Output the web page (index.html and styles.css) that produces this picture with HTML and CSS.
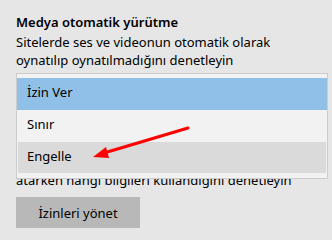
FILE: index.html
```html
<!DOCTYPE html>
<html lang="tr">
<head>
    <meta charset="UTF-8">
    <title>Medya otomatik yürütme</title>
    <link rel="stylesheet" href="styles.css">
</head>
<body>
    <div class="settings-panel">
        <h2 class="setting-title">Medya otomatik yürütme</h2>
        <p class="setting-desc">Sitelerde ses ve videonun otomatik olarak<br>oynatılıp oynatılmadığını denetleyin</p>
        <div class="select-box"></div>

        <p class="setting-desc partly-hidden">atarken hangi bilgileri kullandığını denetleyin</p>
        <button class="manage-btn">İzinleri yönet</button>

        <ul class="dropdown-list">
            <li class="dropdown-item selected">İzin Ver</li>
            <li class="dropdown-item">Sınır</li>
            <li class="dropdown-item hovered">Engelle</li>
        </ul>

        <svg class="pointer-arrow" width="332" height="240" viewBox="0 0 332 240">
            <line x1="188" y1="128" x2="104" y2="153" stroke="#ff0000" stroke-width="3" stroke-linecap="round"/>
            <polygon points="93,157 106,147 109,158" fill="#ff0000"/>
        </svg>
    </div>
</body>
</html>
```

FILE: styles.css
```css
body {
    margin: 0;
    background-color: #e6e6e6;
    font-family: "Noto Sans", "Open Sans", sans-serif;
    color: #000;
}
.settings-panel {
    position: relative;
    width: 332px;
    height: 240px;
    padding: 13px 0 0 16px;
    box-sizing: border-box;
    overflow: hidden;
}
.setting-title {
    margin: 0 0 2px;
    font-size: 13px;
    font-weight: 600;
    line-height: 18px;
}
.setting-desc {
    margin: 0;
    font-size: 13px;
    line-height: 18px;
}
.select-box {
    margin-top: 4px;
    width: 312px;
    height: 32px;
    box-sizing: border-box;
    border: 1px solid #999;
    background-color: #f2f2f2;
}
.setting-desc.partly-hidden {
    margin-top: 66px;
}
.manage-btn {
    display: block;
    margin-top: 8px;
    width: 124px;
    height: 31px;
    border: none;
    background-color: #b8b8b8;
    font-family: inherit;
    font-size: 13px;
    color: #000;
    padding: 0;
}
.dropdown-list {
    position: absolute;
    top: 73px;
    left: 16px;
    width: 312px;
    box-sizing: border-box;
    margin: 0;
    padding: 4px 0 5px;
    list-style: none;
    background-color: #f2f2f2;
    border: 1px solid #cccccc;
}
.dropdown-item {
    height: 32px;
    padding: 5px 0 0 10px;
    box-sizing: border-box;
    font-size: 13px;
    line-height: 18px;
}
.dropdown-item.selected {
    background-color: #90c0e8;
}
.dropdown-item.hovered {
    height: 31px;
    margin: 0 1px;
    padding-left: 9px;
    background-color: #dadada;
}
.pointer-arrow {
    position: absolute;
    top: 0;
    left: 0;
}
```
